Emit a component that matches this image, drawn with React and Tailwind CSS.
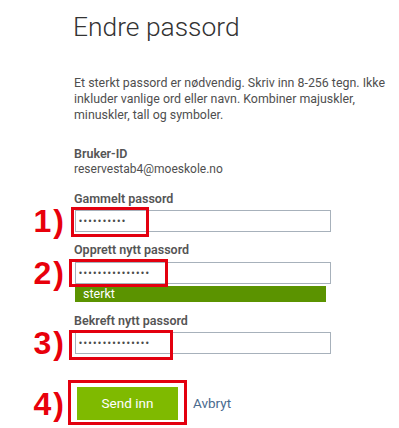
import React from 'react';

const font = { fontFamily: 'Roboto, "Open Sans", sans-serif' };

function Marker({ children, h = 'h-[22px]' }) {
  return (
    <div className={`flex w-[75px] shrink-0 items-center justify-end pr-[9px] font-['Liberation_Sans',Arial,sans-serif] text-[32px] font-bold leading-none tracking-[2px] text-[#e8000b] ${h}`}>
      {children}
    </div>
  );
}

function PasswordField({ dots, boxClass }) {
  return (
    <div className="relative h-[22px] w-[256px] border border-[#a7b1bb] bg-white">
      <div className="flex h-full items-center pl-[3px] font-['Liberation_Sans',Arial,sans-serif] text-[8.5px] tracking-[1.8px] text-[#4a4a4a]">
        {'•'.repeat(dots)}
      </div>
      <div className={`absolute border-[3px] border-[#e3000f] ${boxClass}`}></div>
    </div>
  );
}

function Label({ children, className = '' }) {
  return (
    <div className={`pl-[74px] text-[12.5px] font-semibold leading-[14px] text-[#555] ${className}`}>{children}</div>
  );
}

export default function App() {
  return (
    <div className="h-[428px] w-[399px] overflow-hidden bg-white" style={font}>
      <div className="flex flex-col pt-[11px]">
        <h1 className="pl-[73px] text-[26.4px] font-light leading-[32px] text-[#333]">Endre passord</h1>

        <p className="mt-[32px] whitespace-nowrap pl-[74px] text-[12.4px] leading-[16px] text-[#4f4f4f]">
          Et sterkt passord er nødvendig. Skriv inn 8-256 tegn. Ikke<br />
          inkluder vanlige ord eller navn. Kombiner majuskler,<br />
          minuskler, tall og symboler.
        </p>

        <Label className="mt-[24px]">Bruker-ID</Label>
        <div className="mt-[1px] pl-[74px] text-[12px] leading-[14px] text-[#4f4f4f]">reservestab4@moeskole.no</div>

        <Label className="mt-[16px]">Gammelt passord</Label>
        <div className="mt-[4px] flex">
          <Marker>1)</Marker>
          <PasswordField dots={10} boxClass="-left-[5px] -top-[4px] w-[78px] h-[30px]" />
        </div>

        <Label className="mt-[11px]">Opprett nytt passord</Label>
        <div className="mt-[5px] flex">
          <Marker>2)</Marker>
          <PasswordField dots={15} boxClass="-left-[7px] -top-[4px] w-[99px] h-[28px]" />
        </div>
        <div className="ml-[75px] mt-[2px] flex h-[16px] w-[251px] items-center bg-[#5b9300] pl-[8px] text-[12.5px] text-white">
          sterkt
        </div>

        <Label className="mt-[12px]">Bekreft nytt passord</Label>
        <div className="mt-[4px] flex">
          <Marker>3)</Marker>
          <PasswordField dots={15} boxClass="-left-[7px] -top-[3px] w-[104px] h-[30px]" />
        </div>

        <div className="mt-[33px] flex items-center">
          <Marker h="h-[33px]">4)</Marker>
          <div className="relative ml-[2px]">
            <button className="block h-[33px] w-[101px] bg-[#7fba00] text-[13.5px] text-white">Send inn</button>
            <div className="absolute -left-[9px] -top-[7px] h-[45px] w-[119px] border-[3px] border-[#e3000f]"></div>
          </div>
          <a className="ml-[15px] text-[13.5px] text-[#4a6a8e]">Avbryt</a>
        </div>
      </div>
    </div>
  );
}
